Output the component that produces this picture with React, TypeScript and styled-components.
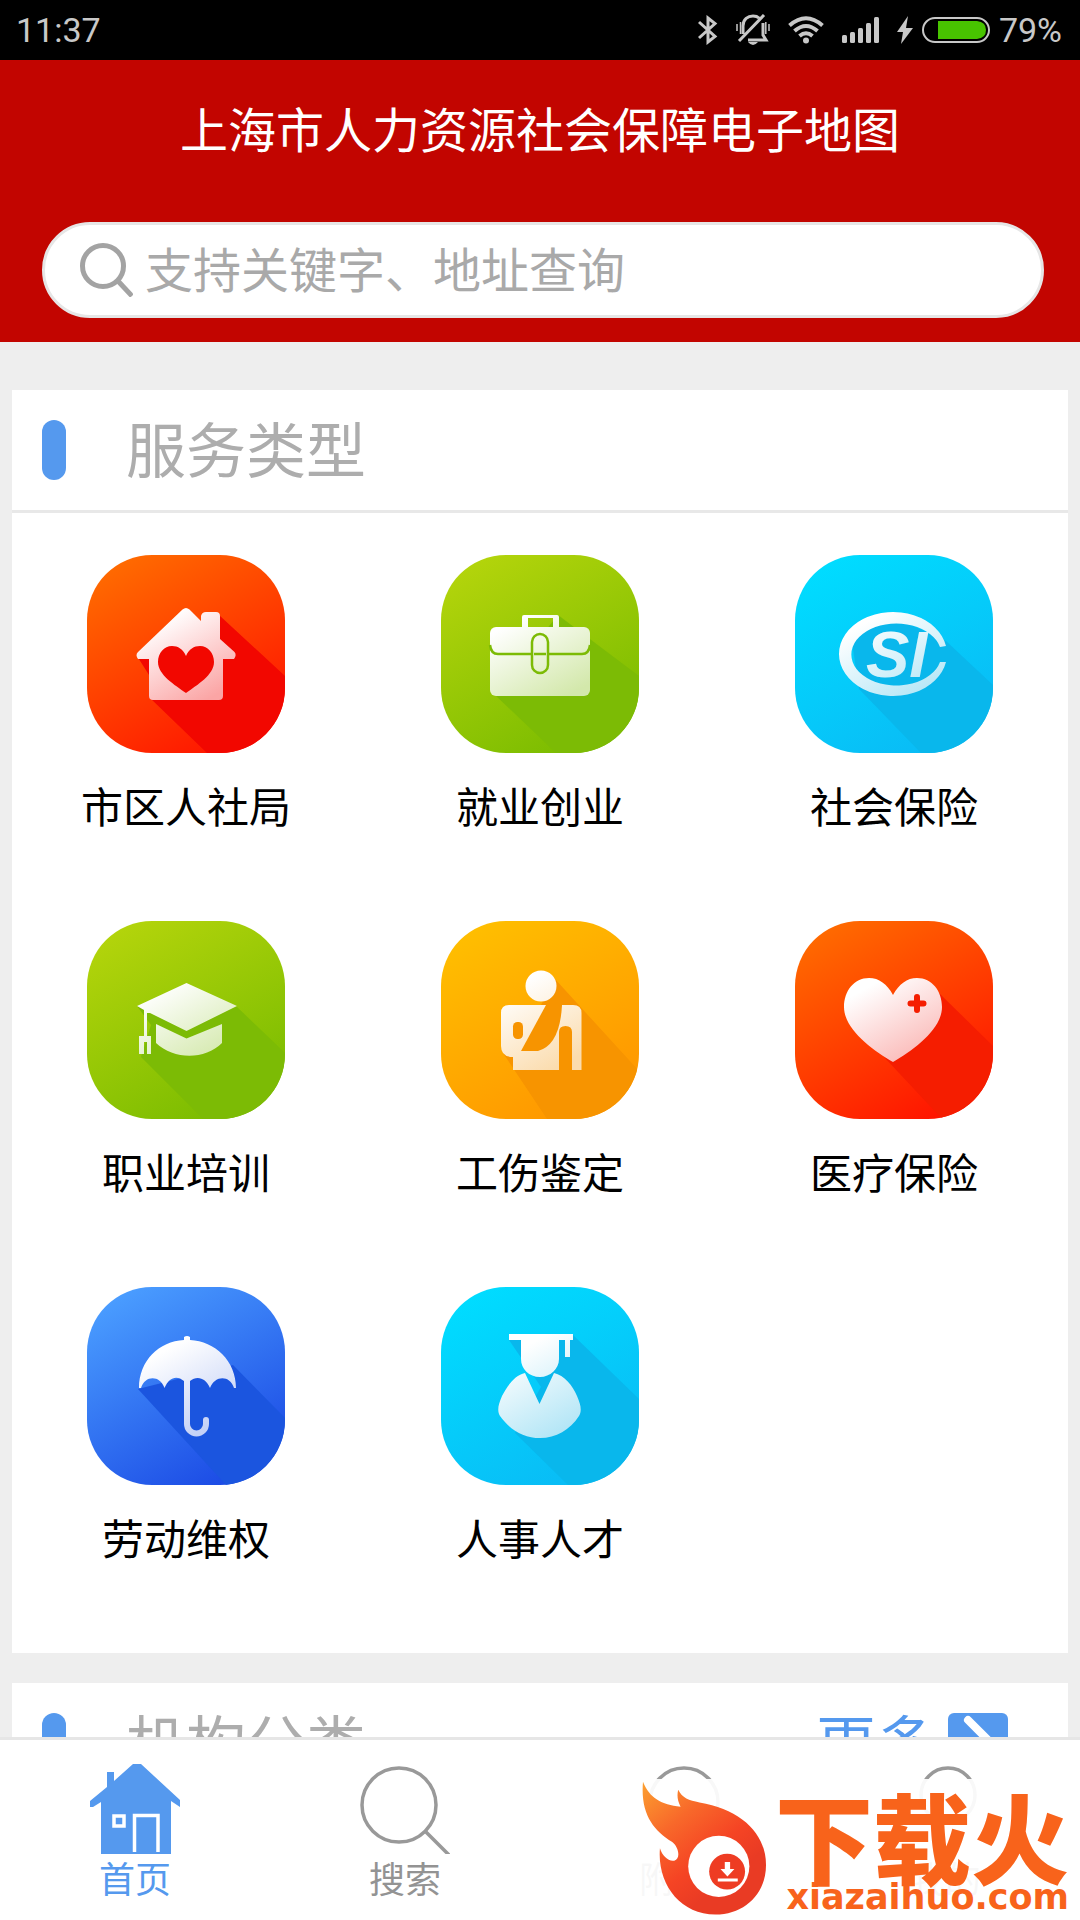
import React from "react";
import styled, { createGlobalStyle } from "styled-components";

const GlobalStyle = createGlobalStyle`
  * { box-sizing: border-box; }
  body {
    margin: 0;
    background: #eee;
    font-family: "Noto Sans", "Noto Sans CJK SC", sans-serif;
    font-weight: 400;
  }
`;

const Screen = styled.div`
  display: flex;
  flex-direction: column;
  height: 100vh;
  background: #eee;
`;

/* ---------- status bar ---------- */

const StatusBar = styled.div`
  display: flex;
  flex: none;
  align-items: center;
  justify-content: space-between;
  height: 60px;
  padding: 0 18px 0 16px;
  background: #000;
  color: #c8c8c8;
  font: 34px/60px Roboto, sans-serif;
`;

const StatusIcons = styled.div`
  display: flex;
  align-items: center;
  gap: 18px;
`;

const Power = styled.div`
  display: flex;
  align-items: center;
  gap: 9px;
`;

/* ---------- header ---------- */

const Header = styled.header`
  flex: none;
  padding: 40px 0 24px;
  background: #c20500;
`;

const PageTitle = styled.h1`
  margin: 0 0 62px;
  color: #fff;
  font-size: 48px;
  font-weight: 400;
  line-height: 60px;
  text-align: center;
`;

const SearchBox = styled.label`
  display: flex;
  align-items: center;
  gap: 12px;
  height: 96px;
  margin: 0 36px 0 42px;
  padding: 0 36px 0 35px;
  border: 3px solid #e6e6e6;
  border-radius: 48px;
  background: #fff;
`;

const SearchInput = styled.input`
  flex: 1;
  min-width: 0;
  height: 72px;
  padding: 0;
  border: 0;
  outline: 0;
  background: transparent;
  color: #333;
  font: inherit;
  font-size: 48px;
  line-height: 72px;

  &::placeholder {
    color: #a9a9a9;
    opacity: 1;
  }
`;

/* ---------- cards ---------- */

const Content = styled.main`
  display: flex;
  flex: 1;
  flex-direction: column;
  gap: 30px;
  min-height: 0;
  padding: 48px 12px 0;
  overflow-y: auto;
  scrollbar-width: none;
`;

const Card = styled.section`
  flex: none;
  background: #fff;
`;

const CardHeader = styled.div`
  display: flex;
  align-items: center;
  height: 123px;
  padding: 0 60px 0 30px;
  border-bottom: 3px solid #e8e8e8;

  &::before {
    content: "";
    width: 24px;
    height: 60px;
    margin-right: 60px;
    border-radius: 12px;
    background: #5599ee;
  }
`;

const CardTitle = styled.h2`
  flex: 1;
  margin: 0;
  color: #adadad;
  font-size: 60px;
  font-weight: 400;
  line-height: 60px;
`;

const MoreLink = styled.a`
  display: flex;
  align-items: center;
  gap: 12px;
  color: #5599ee;
  font-size: 60px;
  line-height: 60px;
  text-decoration: none;
`;

const ServiceGrid = styled.div`
  display: grid;
  grid-template-columns: repeat(3, 1fr);
  grid-auto-rows: 274px;
  row-gap: 92px;
  margin: 0 -3px;
  padding: 42px 0 92px;
`;

const ServiceButton = styled.button`
  display: flex;
  flex-direction: column;
  align-items: center;
  justify-content: flex-start;
  gap: 30px;
  padding: 0;
  border: 0;
  background: none;
  color: #000;
  font: inherit;
  font-size: 42px;
  line-height: 48px;
  white-space: nowrap;
  cursor: pointer;
`;

const Tile = styled.span<{ $from: string; $to: string }>`
  display: block;
  flex: none;
  width: 198px;
  height: 198px;
  overflow: hidden;
  border-radius: 65px;
  background: linear-gradient(150deg, ${(p) => p.$from} 8%, ${(p) => p.$to} 92%);

  svg {
    display: block;
  }
`;

/* ---------- bottom navigation ---------- */

const BottomNav = styled.nav`
  position: relative;
  display: grid;
  flex: none;
  grid-template-columns: repeat(4, 1fr);
  padding: 24px 0 16px;
  border-top: 3px solid #e6e6e6;
  background: #fff;
`;

const NavLink = styled.a<{ $active?: boolean }>`
  display: flex;
  flex-direction: column;
  align-items: center;
  gap: 2px;
  color: ${(p) => (p.$active ? "#5599ee" : "#939393")};
  font-size: 36px;
  line-height: 48px;
  text-decoration: none;
`;

const Watermark = styled.div`
  position: absolute;
  right: 7px;
  bottom: 2px;
  display: flex;
  justify-content: space-between;
  width: 436px;
  height: 139px;
  background: rgba(255, 255, 255, 0.93);
  color: #f8631b;
`;

const WatermarkWords = styled.div`
  display: flex;
  flex-direction: column;
  align-items: flex-end;
  padding: 18px 4px 0 0;
`;

const WatermarkName = styled.strong`
  font-size: 98px;
  font-weight: 900;
  line-height: 84px;
`;

const WatermarkSite = styled.span`
  font: bold 35px/32px "DejaVu Sans", sans-serif;
`;

/* ---------- service pictograms ---------- */

type Service = {
  id: string;
  label: string;
  from: string;
  to: string;
  shadow: string;
  tint: string;
  shadowPath: string;
  draw: (fill: string, ground: string) => React.ReactNode;
};

const services: Service[] = [
  {
    id: "bureau",
    label: "市区人社局",
    from: "#ff6a00",
    to: "#ff1200",
    shadow: "#f20700",
    tint: "#fba5a5",
    shadowPath: "M132 60L198 121V198H120L62 142V120L50 101Z",
    draw: (fill, ground) => (
      <>
        <path
          fill={fill}
          d="M95.500 54.500Q99 51.500 102.500 54.500L114 66V61Q115 57 119 57H129Q133 57 133 61V84L147.500 97Q150 100 147 104H136V141Q136 145 132 145H66Q62 145 62 141V104H51Q48 100 51 97Z"
        />
        <path
          fill={ground}
          d="M99 101C96 94 91 91 85 91C77 91 71 98 71 107C71 120 88 130 99 138C110 130 127 120 127 107C127 98 121 91 113 91C107 91 102 94 99 101Z"
        />
      </>
    ),
  },
  {
    id: "employment",
    label: "就业创业",
    from: "#b3d40b",
    to: "#78bb00",
    shadow: "#7cbb05",
    tint: "#d3e8ab",
    shadowPath: "M117 60L198 121V198H115L53 139Z",
    draw: (fill, ground) => (
      <>
        <path fill={fill} d="M81 73V62Q81 60 83 60H116Q118 60 118 62V73H112V63H87V73Z" />
        <rect x="49" y="72" width="100" height="69" rx="6" fill={fill} />
        <g fill="none" stroke={ground} strokeWidth="2.500">
          <path d="M49 90Q50 99 57 99H90M108 99H141Q148 99 149 90M93 99H105" />
          <rect x="91" y="79" width="16" height="39" rx="8" />
        </g>
      </>
    ),
  },
  {
    id: "social",
    label: "社会保险",
    from: "#00dcff",
    to: "#0abaf5",
    shadow: "#09b7ec",
    tint: "#b4e6f6",
    shadowPath: "M151 86L198 130V198H126L64 134L56 80L99 62Z",
    draw: (fill) => (
      <>
        <path
          fill={fill}
          d="M151 91A54 42 0 1 0 151 107H145A45 31 0 1 1 145 92Z"
        />
        <text
          x="71"
          y="122"
          fill={fill}
          fontFamily="Liberation Sans, sans-serif"
          fontSize="65"
          fontStyle="italic"
          fontWeight="700"
        >
          SI
        </text>
      </>
    ),
  },
  {
    id: "training",
    label: "职业培训",
    from: "#b3d40b",
    to: "#78bb00",
    shadow: "#7cbb05",
    tint: "#d3e8ab",
    shadowPath: "M149 85L198 132V198H116L54 136L64 104L50 85Z",
    draw: (fill) => (
      <>
        <path fill={fill} d="M99.500 62L150 85L99.500 110L63 92H60V115H64V133H60V121H57V133H52V115H57V89L50 85Z" />
        <path fill={fill} d="M69 103L99.500 117.500L135 103V122C118 139 87 139 69 122Z" />
      </>
    ),
  },
  {
    id: "injury",
    label: "工伤鉴定",
    from: "#ffbe00",
    to: "#ff9500",
    shadow: "#f79400",
    tint: "#fbdcae",
    shadowPath: "M114 58L198 150V198H106L62 132L100 84Z",
    draw: (fill, ground) => (
      <>
        <circle cx="100" cy="65" r="15.500" fill={fill} />
        <path
          fill={fill}
          d="M68 84H132Q140.500 84 140.500 92V149H131V111Q131 105 124.500 105Q118 105 118 111V149H72V136Q60 136 60 125V92Q60 84 68 84Z"
        />
        <path fill={ground} d="M105 84H121Q119 124 97 130H80Z" />
        <rect x="72" y="101" width="10" height="17" rx="4.500" fill={ground} />
      </>
    ),
  },
  {
    id: "medical",
    label: "医疗保险",
    from: "#ff6a00",
    to: "#ff1200",
    shadow: "#f51d00",
    tint: "#fab4b2",
    shadowPath: "M144 72L198 125V198H147L90 137Z",
    draw: (fill, ground) => (
      <>
        <path
          fill={fill}
          d="M98 74C92 63 84 57 74 57C59 57 49 70 49 86C49 108 77 129 98 141C119 129 147 108 147 86C147 70 137 57 122 57C112 57 104 63 98 74Z"
        />
        <path stroke={ground} strokeWidth="6" strokeLinecap="round" d="M115.500 82.500H128.500M122 76V89" />
      </>
    ),
  },
  {
    id: "rights",
    label: "劳动维权",
    from: "#4a9dff",
    to: "#1a48e4",
    shadow: "#1b55df",
    tint: "#c3d0f6",
    shadowPath: "M146 78L198 131V198H139L51 102Z",
    draw: (fill) => (
      <>
        <path
          fill={fill}
          d="M97 53V50Q100 48 103 50V53C128 54 149 74 149 101H147C143 88 128 88 123 101C119 91 110 88 103 94H97C90 88 82 90 77.500 101C73 88 58 88 54 101H52C52 74 72 54 97 53Z"
        />
        <path
          fill="none"
          stroke={fill}
          strokeWidth="6"
          strokeLinecap="round"
          d="M100 80V137A9.500 9.500 0 0 0 119 137V133"
        />
      </>
    ),
  },
  {
    id: "talent",
    label: "人事人才",
    from: "#00dcff",
    to: "#0abaf5",
    shadow: "#09b7ec",
    tint: "#b4e6f6",
    shadowPath: "M132 48L198 112V198H127L74 146L100 100L68 53Z",
    draw: (fill) => (
      <>
        <path
          fill={fill}
          d="M68 47H132V53H129V70H124V53H118V72C118 82 109 90 99 90C88 90 80 82 80 72V53H68Z"
        />
        <path
          fill={fill}
          d="M84 86L98.500 117L113 86C123 88 132 99 136 109C140 118 141 124 138 129C129 143 115 151 99 151C83 151 69 143 59 129C56 124 57 118 61 109C66 99 74 88 84 86Z"
        />
      </>
    ),
  },
];

function ServiceIcon({ service }: { service: Service }) {
  const gradient = `glyph-${service.id}`;
  return (
    <Tile $from={service.from} $to={service.to}>
      <svg width="198" height="198" viewBox="0 0 198 198" aria-hidden="true">
        <defs>
          <linearGradient id={gradient} gradientUnits="userSpaceOnUse" x1="75" y1="65" x2="120" y2="145">
            <stop offset="0" stopColor="#fff" />
            <stop offset="1" stopColor={service.tint} />
          </linearGradient>
        </defs>
        <path d={service.shadowPath} fill={service.shadow} />
        {service.draw(`url(#${gradient})`, service.shadow)}
      </svg>
    </Tile>
  );
}

/* ---------- status icons ---------- */

function StatusGlyphs() {
  return (
    <StatusIcons>
      <svg width="20" height="30" viewBox="0 0 20 30" fill="none" stroke="#c8c8c8" strokeWidth="3">
        <path d="M1 7L17 21.500L10 27V3L17 8.500L1 23" />
      </svg>
      <svg width="34" height="32" viewBox="0 0 34 32" fill="none" stroke="#c8c8c8" strokeWidth="3">
        <path d="M7 20V12C7 5 12 2 17 2C19 2 22 3 23 4M27 9V21L30 26H12M3 27L28 1" />
        <path d="M1 10V17M4.500 8V20M33 10V17M29.800 8V20" strokeWidth="1.500" />
        <path d="M12 28H22Q17 34 12 28Z" fill="#c8c8c8" stroke="none" />
      </svg>
      <svg width="36" height="28" viewBox="0 0 36 28" fill="none" stroke="#c8c8c8" strokeWidth="4">
        <path d="M1.500 9.500Q18 -5 34.500 9.500M6.500 15Q18 5 29.500 15M11.500 20Q18 14.500 24.500 20" />
        <circle cx="18" cy="24.500" r="3" fill="#c8c8c8" stroke="none" />
      </svg>
      <svg width="37" height="26" viewBox="0 0 37 26" fill="#c8c8c8">
        <rect x="0" y="18" width="5" height="8" rx="1.500" />
        <rect x="8" y="15" width="5" height="11" rx="1.500" />
        <rect x="16" y="11" width="5" height="15" rx="1.500" />
        <rect x="24" y="6" width="5" height="20" rx="1.500" />
        <rect x="32" y="0" width="5" height="26" rx="1.500" />
      </svg>
      <Power>
        <svg width="16" height="28" viewBox="0 0 16 28" fill="#c8c8c8">
          <path d="M11 0L0 16H6L4 28L16 12H9Z" />
        </svg>
        <svg width="68" height="26" viewBox="0 0 68 26">
          <rect x="1" y="1" width="66" height="24" rx="12" fill="none" stroke="#c8c8c8" strokeWidth="2" />
          <path d="M16 4H55Q64 5 64 13Q64 21 55 22H16Z" fill="#48c400" />
        </svg>
        <span>79%</span>
      </Power>
    </StatusIcons>
  );
}

/* ---------- watermark emblem ---------- */

function FlameLogo() {
  return (
    <svg width="133" height="138" viewBox="22 27 400 414" aria-hidden="true">
      <defs>
        <linearGradient id="flame" x1="0" y1="0" x2="0.6" y2="0.8">
          <stop offset="0" stopColor="#fca030" />
          <stop offset="0.4" stopColor="#f8682a" />
          <stop offset="0.75" stopColor="#f54424" />
          <stop offset="1" stopColor="#e93b24" />
        </linearGradient>
      </defs>
      <path
        fill="url(#flame)"
        d="M40 35C60 85 95 103 153 110C143 90 142 75 146 59C158 84 178 91 210 97C335 118 410 190 410 285C410 372 345 434 258 434C150 434 82 340 91 235C98 258 116 275 134 272C154 266 148 232 128 216C70 180 32 130 40 35Z"
      />
      <circle cx="268" cy="289" r="92" fill="#fff" />
      <circle cx="293" cy="305" r="54" fill="#ee3c23" />
      <path fill="#fff" d="M286 276H302V297H315L294 320L273 297H286ZM265 326H325V335H265Z" />
    </svg>
  );
}

export default function App() {
  return (
    <Screen lang="zh-CN">
      <GlobalStyle />
      <StatusBar>
        <span>11:37</span>
        <StatusGlyphs />
      </StatusBar>

      <Header>
        <PageTitle>上海市人力资源社会保障电子地图</PageTitle>
        <SearchBox>
          <svg width="53" height="54" viewBox="0 0 53 54" fill="none" stroke="#a3a3a3" strokeWidth="5" aria-hidden="true">
            <circle cx="23" cy="23" r="20.500" />
            <path d="M38 38L52 53" />
          </svg>
          <SearchInput type="search" placeholder="支持关键字、地址查询" />
        </SearchBox>
      </Header>

      <Content>
        <Card>
          <CardHeader>
            <CardTitle>服务类型</CardTitle>
          </CardHeader>
          <ServiceGrid>
            {services.map((service) => (
              <ServiceButton key={service.id} type="button">
                <ServiceIcon service={service} />
                {service.label}
              </ServiceButton>
            ))}
          </ServiceGrid>
        </Card>
        <Card>
          <CardHeader>
            <CardTitle>机构分类</CardTitle>
            <MoreLink href="#more">
              更多
              <svg width="60" height="60" viewBox="0 0 60 60" aria-hidden="true">
                <rect width="60" height="60" rx="6" fill="#5599ee" />
                <path
                  d="M20 7L43 30L20 53"
                  fill="none"
                  stroke="#fff"
                  strokeWidth="8"
                  strokeLinecap="round"
                  strokeLinejoin="round"
                />
              </svg>
            </MoreLink>
          </CardHeader>
        </Card>
      </Content>

      <BottomNav>
        <NavLink href="#home" $active>
          <svg width="90" height="90" viewBox="0 0 90 90" aria-hidden="true">
            <path
              fill="#5599ee"
              d="M43 0H51L90 36V43L81 37V90H11V38L3 43H0V37L17 23V8H24V17Z"
            />
            <g fill="none" stroke="#fff" strokeWidth="3.500">
              <rect x="24" y="52" width="10" height="10" />
              <path d="M44.500 88V51.500H68V88" />
            </g>
          </svg>
          首页
        </NavLink>
        <NavLink href="#search">
          <svg width="90" height="90" viewBox="0 0 90 90" fill="none" stroke="#999" strokeWidth="3.500" aria-hidden="true">
            <circle cx="39" cy="41" r="37" />
            <path d="M65 67L89 91" />
          </svg>
          搜索
        </NavLink>
        <NavLink href="#nearby">
          <svg width="90" height="90" viewBox="0 0 90 90" fill="none" stroke="#999" strokeWidth="3.500" aria-hidden="true">
            <circle cx="54" cy="38" r="34" />
          </svg>
          附近
        </NavLink>
        <NavLink href="#mine">
          <svg width="90" height="90" viewBox="0 0 90 90" fill="none" stroke="#999" strokeWidth="3.500" aria-hidden="true">
            <circle cx="48" cy="31" r="27" />
          </svg>
          我的
        </NavLink>
        <Watermark>
          <FlameLogo />
          <WatermarkWords>
            <WatermarkName>下载火</WatermarkName>
            <WatermarkSite>xiazaihuo.com</WatermarkSite>
          </WatermarkWords>
        </Watermark>
      </BottomNav>
    </Screen>
  );
}
